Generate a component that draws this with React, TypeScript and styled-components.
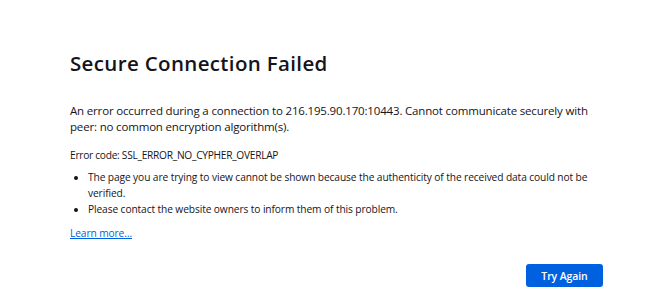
import React from "react";
import styled, { createGlobalStyle } from "styled-components";

const Global = createGlobalStyle`
  html, body { margin: 0; padding: 0; background: #ffffff; }
  body { font-family: "Open Sans", "Noto Sans", sans-serif; color: #15141a; }
`;

const Page = styled.main`
  box-sizing: border-box;
  width: 657px;
  padding: 49px 54px 0 70px;
`;

const Container = styled.div`
  display: flex;
  flex-direction: column;
  width: 533px;
`;

const Title = styled.h1`
  margin: 0;
  font-size: 20.5px;
  line-height: 28px;
  font-weight: 600;
  letter-spacing: 0.35px;
`;

const Intro = styled.p`
  margin: 26px 0 0;
  font-size: 11.5px;
  line-height: 16px;
  letter-spacing: -0.17px;
`;

const Code = styled.p`
  margin: 13px 0 0;
  font-size: 10.2px;
  line-height: 14px;
  letter-spacing: -0.28px;
`;

const List = styled.ul`
  margin: 7px 0 0;
  padding: 0 0 0 18px;
  font-size: 10.2px;
  line-height: 16px;
  letter-spacing: -0.1px;
`;

const Item = styled.li``;

const Link = styled.a`
  margin-top: 8px;
  font-size: 10.2px;
  line-height: 16px;
  color: #0061e0;
  text-decoration: underline;
  align-self: flex-start;
  letter-spacing: -0.1px;
`;

const Actions = styled.div`
  display: flex;
  justify-content: flex-end;
  margin-top: 23px;
`;

const Button = styled.button`
  font-family: "Open Sans", "Noto Sans", sans-serif;
  background: #0061e0;
  color: #ffffff;
  border: none;
  border-radius: 3px;
  width: 77px;
  height: 23px;
  padding: 0;
  font-size: 10.5px;
  font-weight: 600;
  letter-spacing: -0.1px;
`;

export default function App() {
  return (
    <>
      <Global />
      <Page>
        <Container>
          <Title>Secure Connection Failed</Title>
          <Intro>
            An error occurred during a connection to 216.195.90.170:10443. Cannot communicate securely with
            peer: no common encryption algorithm(s).
          </Intro>
          <Code>Error code: SSL_ERROR_NO_CYPHER_OVERLAP</Code>
          <List>
            <Item>The page you are trying to view cannot be shown because the authenticity of the received data could not be verified.</Item>
            <Item>Please contact the website owners to inform them of this problem.</Item>
          </List>
          <Link href="#">Learn more…</Link>
          <Actions>
            <Button>Try Again</Button>
          </Actions>
        </Container>
      </Page>
    </>
  );
}
